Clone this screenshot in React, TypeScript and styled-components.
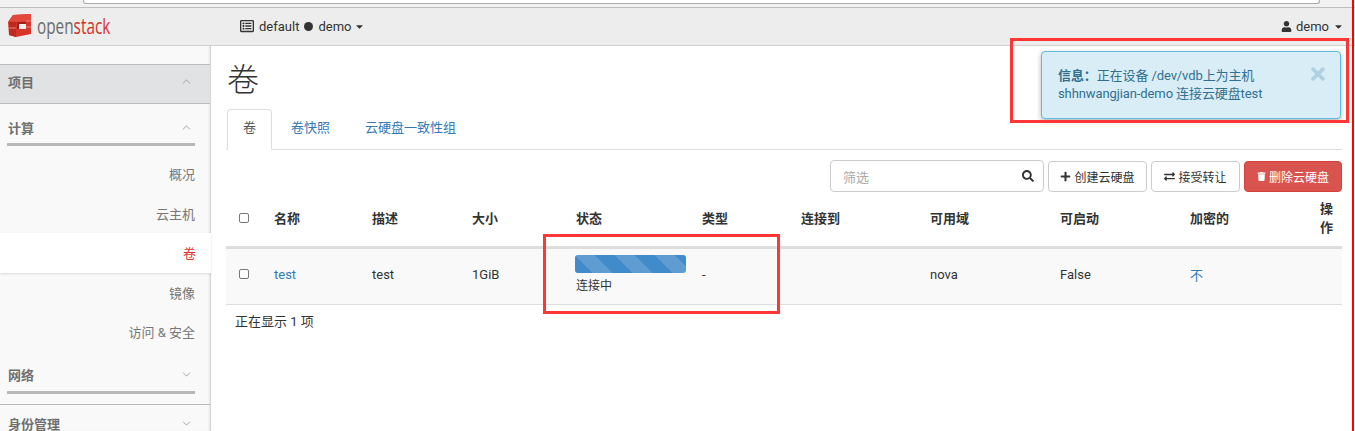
import React from "react";
import styled, { createGlobalStyle } from "styled-components";
import { ChevronDown, ChevronUp } from "lucide-react";
import {
  FaCaretDown,
  FaExchangeAlt,
  FaPlus,
  FaRegListAlt,
  FaSearch,
  FaTimes,
  FaTrash,
  FaUser,
} from "react-icons/fa";

const FONT = `Roboto, "Liberation Sans", "Noto Sans CJK SC", sans-serif`;

const GlobalStyle = createGlobalStyle`
  html, body {
    margin: 0;
    padding: 0;
    height: 100%;
    overflow: hidden;
    background: #fff;
  }
  body {
    font-family: ${FONT};
    font-size: 13px;
    color: #333;
  }
`;

const columns = [40, 98, 100, 104, 126, 99, 129, 130, 130, 130, 30];

const Logo = () => (
  <LogoBox>
    <svg width="25" height="24" viewBox="0 0 25 24">
      <path d="M0 8 L5 1 L23 0 L23 20 L8 23 L1 21 Z" fill="#d8352a" />
      <path d="M5 1 L23 0 L23 7 L9 8 L1 7 Z" fill="#e2483c" />
      <path d="M1 8 L8 8 L8 23 L1 21 Z" fill="#bd2a22" />
      <rect x="9" y="8" width="9" height="7" fill="#f4efed" />
      <path d="M9 8 H18 V10 H11 V15 H9 Z" fill="#9e211c" />
      <path d="M18 7 H23 M18 13 H23 M1 14 H8" stroke="#f08276" strokeWidth="1" />
    </svg>
    <LogoText>
      open<LogoAccent>stack</LogoAccent>
    </LogoText>
  </LogoBox>
);

export default function App() {
  return (
    <Page>
      <GlobalStyle />
      <BrowserStrip>
        <AddressField />
      </BrowserStrip>
      <TopBar>
        <Logo />
        <ProjectPicker>
          <FaRegListAlt size={14} />
          <span>default</span>
          <Dot />
          <span>demo</span>
          <FaCaretDown size={11} />
        </ProjectPicker>
        <UserMenu>
          <FaUser size={11} />
          <span>demo</span>
          <FaCaretDown size={11} />
        </UserMenu>
      </TopBar>
      <Body>
        <Sidebar>
          <SectionHead>
            <span>项目</span>
            <ChevronUp size={13} strokeWidth={1.5} />
          </SectionHead>
          <BarHead $gap={8}>
            <span>计算</span>
            <ChevronUp size={13} strokeWidth={1.5} />
          </BarHead>
          <NavItem>概况</NavItem>
          <NavItem>云主机</NavItem>
          <NavItem $current>卷</NavItem>
          <NavItem>镜像</NavItem>
          <NavItem>访问 &amp; 安全</NavItem>
          <BarHead $gap={10}>
            <span>网络</span>
            <ChevronDown size={13} strokeWidth={1.5} />
          </BarHead>
          <LastHead>
            <span>身份管理</span>
            <ChevronDown size={13} strokeWidth={1.5} />
          </LastHead>
        </Sidebar>
        <Main>
          <Title>卷</Title>
          <Tabs>
            <Tab $active>卷</Tab>
            <Tab>卷快照</Tab>
            <Tab>云硬盘一致性组</Tab>
          </Tabs>
          <Toolbar>
            <Filter>
              <FilterPlaceholder>筛选</FilterPlaceholder>
              <FaSearch size={12} />
            </Filter>
            <ActionButton $width={99}>
              <FaPlus size={11} />
              创建云硬盘
            </ActionButton>
            <ActionButton $width={89}>
              <FaExchangeAlt size={11} />
              接受转让
            </ActionButton>
            <ActionButton $width={98} $danger>
              <FaTrash size={9} />
              删除云硬盘
            </ActionButton>
          </Toolbar>
          <Table>
            <colgroup>
              {columns.map((w, i) => (
                <col key={i} width={w} />
              ))}
            </colgroup>
            <thead>
              <tr>
                <HeadCell>
                  <CheckBox />
                </HeadCell>
                <HeadCell>名称</HeadCell>
                <HeadCell>描述</HeadCell>
                <HeadCell>大小</HeadCell>
                <HeadCell>状态</HeadCell>
                <HeadCell>类型</HeadCell>
                <HeadCell>连接到</HeadCell>
                <HeadCell>可用域</HeadCell>
                <HeadCell>可启动</HeadCell>
                <HeadCell>加密的</HeadCell>
                <HeadCell>操作</HeadCell>
              </tr>
            </thead>
            <tbody>
              <tr>
                <Cell>
                  <CheckBox />
                </Cell>
                <Cell>
                  <TableLink>test</TableLink>
                </Cell>
                <Cell>test</Cell>
                <Cell>1GiB</Cell>
                <StatusCell>
                  <Progress />
                  <StatusText>连接中</StatusText>
                </StatusCell>
                <Cell>-</Cell>
                <Cell />
                <Cell>nova</Cell>
                <Cell>False</Cell>
                <Cell>
                  <TableLink>不</TableLink>
                </Cell>
                <Cell />
              </tr>
            </tbody>
          </Table>
          <Footer>正在显示 1 项</Footer>
        </Main>
      </Body>

      <Alert>
        <AlertText>
          <strong>信息：</strong>正在设备 /dev/vdb上为主机
          <br />
          shhnwangjian-demo 连接云硬盘test
        </AlertText>
        <AlertClose>
          <FaTimes size={20} />
        </AlertClose>
      </Alert>
      <AlertMark />
      <StatusMark />
      <EdgeLine />
    </Page>
  );
}

const Page = styled.div`
  position: relative;
  height: 431px;
  overflow: hidden;
  display: flex;
  flex-direction: column;
`;

const BrowserStrip = styled.div`
  height: 8px;
  background: #f1f1f1;
  border-bottom: 1px solid #bdbdbd;
  padding: 0 35px 0 83px;
  box-sizing: border-box;
  flex: none;
`;

const AddressField = styled.div`
  height: 3px;
  background: #fff;
  border: 1px solid #aaa;
  border-top: 0;
  border-radius: 0 0 3px 3px;
`;

const TopBar = styled.header`
  height: 38px;
  flex: none;
  background: #ededed;
  border-bottom: 1px solid #cfcfcf;
  box-sizing: border-box;
  display: flex;
  align-items: center;
  padding: 0 11px 1px 8px;
  color: #333;
  font-size: 13px;
`;

const LogoBox = styled.div`
  width: 232px;
  flex: none;
  display: flex;
  align-items: center;
  gap: 4px;
`;

const LogoText = styled.span`
  display: inline-block;
  font-family: "Open Sans", sans-serif;
  font-size: 21px;
  color: #6b6b6b;
  transform: scaleX(0.73);
  transform-origin: left center;
`;

const LogoAccent = styled.span`
  color: #d3312b;
`;

const ProjectPicker = styled.div`
  display: flex;
  align-items: center;
  gap: 5px;

  svg:last-child {
    margin-left: -2px;
  }
`;

const Dot = styled.i`
  width: 9px;
  height: 9px;
  border-radius: 50%;
  background: #333;
`;

const UserMenu = styled.div`
  margin-left: auto;
  display: flex;
  align-items: center;
  gap: 4px;
`;

const Body = styled.div`
  flex: 1;
  display: flex;
  min-height: 0;
`;

const Sidebar = styled.nav`
  width: 211px;
  flex: none;
  box-sizing: border-box;
  padding-top: 18px;
  background: #f9f9f9;
  border-right: 1px solid #d4d4d4;
  box-shadow: inset -2px 0 2px -1px rgba(0, 0, 0, 0.08);
  color: #777;
`;

const SectionHead = styled.div`
  height: 40px;
  box-sizing: border-box;
  display: flex;
  align-items: center;
  justify-content: space-between;
  padding: 0 17px 5px 8px;
  font-weight: 700;
  font-size: 13px;
  color: #6f6f6f;
  background: #e1e2e4;
  border-top: 1px solid #bcbcbc;
  border-bottom: 1px solid #bcbcbc;

  svg {
    color: #87939d;
  }
`;

const BarHead = styled.div<{ $gap: number }>`
  position: relative;
  height: 42px;
  margin-bottom: ${(p) => p.$gap}px;
  box-sizing: border-box;
  display: flex;
  align-items: center;
  justify-content: space-between;
  padding: 4px 17px 0 8px;
  font-weight: 700;
  font-size: 13px;
  color: #6f6f6f;

  svg {
    color: #87939d;
  }

  &::after {
    content: "";
    position: absolute;
    left: 7px;
    width: 188px;
    bottom: 0;
    height: 3px;
    background: #b8b8b8;
  }
`;

const LastHead = styled.div`
  height: 38px;
  box-sizing: border-box;
  display: flex;
  align-items: center;
  justify-content: space-between;
  padding: 0 17px 0 8px;
  font-weight: 700;
  font-size: 13px;
  color: #6f6f6f;
  border-top: 1px solid #bcbcbc;

  svg {
    color: #87939d;
  }
`;

const NavItem = styled.div<{ $current?: boolean }>`
  height: 39.5px;
  box-sizing: border-box;
  display: flex;
  align-items: center;
  justify-content: flex-end;
  padding-right: 15px;
  font-size: 13px;
  color: ${(p) => (p.$current ? "#d9342b" : "#777")};
  background: ${(p) => (p.$current ? "#fff" : "transparent")};
  box-shadow: ${(p) => (p.$current ? "0 1px 2px rgba(0,0,0,.12)" : "none")};
  margin-right: ${(p) => (p.$current ? "-1px" : "0")};
  position: relative;
`;

const Main = styled.main`
  flex: 1;
  min-width: 0;
  box-sizing: border-box;
  padding: 0 13px 0 15px;
`;

const Title = styled.h1`
  margin: 14px 0 8px 1px;
  height: 41px;
  font-size: 32px;
  line-height: 41px;
  font-weight: 300;
  color: #333;
`;

const Tabs = styled.ul`
  list-style: none;
  margin: 0;
  padding: 0 0 0 1px;
  height: 41px;
  box-sizing: border-box;
  display: flex;
  gap: 3px;
  border-bottom: 1px solid #ddd;
`;

const Tab = styled.li<{ $active?: boolean }>`
  height: 41px;
  box-sizing: border-box;
  padding: 0 15px 6px;
  display: flex;
  align-items: center;
  font-size: 13px;
  color: ${(p) => (p.$active ? "#555" : "#337ab7")};
  background: ${(p) => (p.$active ? "#fff" : "transparent")};
  border: 1px solid ${(p) => (p.$active ? "#ddd" : "transparent")};
  border-bottom-color: ${(p) => (p.$active ? "#fff" : "transparent")};
  border-radius: 4px 4px 0 0;
`;

const Toolbar = styled.div`
  margin-top: 10px;
  display: flex;
  justify-content: flex-end;
  align-items: flex-end;
  gap: 4px;
  height: 32px;
`;

const Filter = styled.div`
  width: 214px;
  height: 32px;
  box-sizing: border-box;
  border: 1px solid #ccc;
  border-radius: 4px;
  display: flex;
  align-items: center;
  justify-content: space-between;
  padding: 0 9px 0 12px;
  color: #333;
`;

const FilterPlaceholder = styled.span`
  color: #aaa;
  font-size: 13px;
`;

const ActionButton = styled.div<{ $width: number; $danger?: boolean }>`
  width: ${(p) => p.$width}px;
  height: 31px;
  box-sizing: border-box;
  border: 1px solid ${(p) => (p.$danger ? "#d43f3a" : "#ccc")};
  border-radius: 4px;
  background: ${(p) => (p.$danger ? "#d9534f" : "#fff")};
  color: ${(p) => (p.$danger ? "#fff" : "#333")};
  display: flex;
  align-items: center;
  justify-content: center;
  gap: 3px;
  font-size: 12px;
`;

const Table = styled.table`
  width: 1116px;
  table-layout: fixed;
  border-collapse: collapse;
  margin-top: -2px;
`;

const HeadCell = styled.th`
  height: 57px;
  padding: 9px 8px 9px;
  box-sizing: border-box;
  text-align: left;
  font-size: 13px;
  line-height: 19px;
  font-weight: 700;
  color: #333;
  border-bottom: 3px solid #ddd;
  vertical-align: middle;

  &:first-child {
    padding-left: 13px;
  }
`;

const Cell = styled.td`
  height: 57px;
  padding: 0 8px 5px;
  box-sizing: border-box;
  font-size: 13px;
  color: #333;
  background: #f9f9f9;
  border-bottom: 1px solid #ddd;
  vertical-align: middle;

  &:first-child {
    padding-left: 13px;
  }
`;

const StatusCell = styled(Cell)`
  padding-bottom: 3px;
`;

const CheckBox = styled.div`
  width: 10px;
  height: 10px;
  box-sizing: border-box;
  background: #fff;
  border: 1px solid #777;
  border-radius: 2px;
`;

const TableLink = styled.a`
  color: #337ab7;
`;

const Progress = styled.div`
  width: 111px;
  height: 18px;
  margin-left: -1px;
  border-radius: 3px;
  background-color: #428bca;
  background-image: linear-gradient(
    45deg,
    rgba(255, 255, 255, 0.15) 25%,
    transparent 25%,
    transparent 50%,
    rgba(255, 255, 255, 0.15) 50%,
    rgba(255, 255, 255, 0.15) 75%,
    transparent 75%,
    transparent
  );
  background-size: 40px 40px;
`;

const StatusText = styled.div`
  margin-top: 4px;
  font-size: 12px;
  line-height: 18px;
`;

const Footer = styled.div`
  padding: 8px 9px;
  font-size: 13px;
  line-height: 18px;
  color: #333;
`;

const Alert = styled.div`
  position: absolute;
  left: 1041px;
  top: 51px;
  width: 300px;
  height: 68px;
  box-sizing: border-box;
  padding: 15px 16px;
  background: #d9edf7;
  border: 1px solid #5ebcdc;
  border-radius: 4px;
  color: #31708f;
  font-size: 13px;
  line-height: 18px;
  letter-spacing: -0.1px;
  box-shadow: 0 2px 5px rgba(0, 0, 0, 0.3);
`;

const AlertText = styled.div`
  strong {
    font-weight: 700;
  }
`;

const AlertClose = styled.span`
  position: absolute;
  top: 12px;
  right: 12px;
  display: flex;
  color: #aed0e0;
`;

const AlertMark = styled.div`
  position: absolute;
  left: 1010px;
  top: 38px;
  width: 339px;
  height: 85px;
  box-sizing: border-box;
  border: 3px solid #ff3636;
`;

const StatusMark = styled.div`
  position: absolute;
  left: 543px;
  top: 234px;
  width: 237px;
  height: 80px;
  box-sizing: border-box;
  border: 3px solid #ff3636;
`;

const EdgeLine = styled.div`
  position: absolute;
  top: 0;
  bottom: 0;
  right: 1px;
  width: 2px;
  background: #f00;
`;
